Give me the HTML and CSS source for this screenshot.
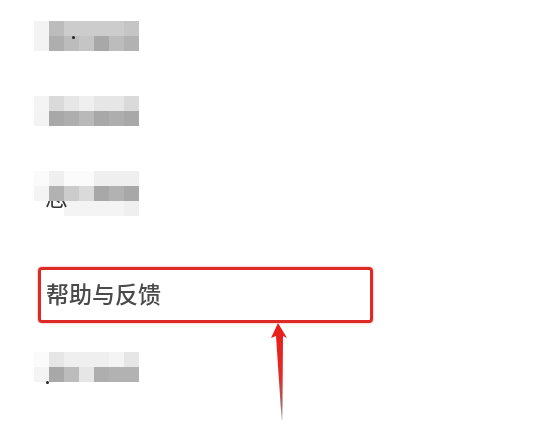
FILE: index.html
```html
<!DOCTYPE html>
<html lang="zh-CN">
<head>
<meta charset="utf-8">
<title>帮助与反馈</title>
<link rel="stylesheet" href="styles.css">
</head>
<body>
<main class="page">
  <div class="mosaic">
    <i class="g0"></i><i class="g6"></i><i class="g8"></i><i class="g8"></i><i class="g8"></i><i class="g8"></i><i class="g7"></i>
    <i class="g0"></i><i class="g3"></i><i class="g6"></i><i class="g7"></i><i class="g2"></i><i class="g6"></i><i class="g4"></i>
    <b class="dot dot-a"></b>
  </div>
  <div class="mosaic">
    <i class="g1"></i><i class="g9"></i><i class="g10"></i><i class="g11"></i><i class="g10"></i><i class="g10"></i><i class="g9"></i>
    <i class="g0"></i><i class="g2"></i><i class="g3"></i><i class="g5"></i><i class="g2"></i><i class="g3"></i><i class="g2"></i>
  </div>
  <div class="mosaic">
    <span class="glyph">志</span>
    <i class="g12"></i><i class="g11"></i><i class="g12"></i><i class="g12"></i><i class="g11"></i><i class="g11"></i><i class="g11"></i>
    <i class="g1 top"></i><i class="g4 top"></i><i class="g8 top"></i><i class="g9 top"></i><i class="g2 top"></i><i class="g4 top"></i><i class="g2 top"></i>
    <i class="none"></i><i class="none"></i><i class="g1"></i><i class="g1"></i><i class="g1"></i><i class="g1"></i><i class="g11"></i>
  </div>
  <div class="help-box">
    <span class="help-label">帮助与反馈</span>
  </div>
  <div class="mosaic">
    <i class="g12"></i><i class="g10"></i><i class="g11"></i><i class="g11"></i><i class="g11"></i><i class="g1"></i><i class="g10"></i>
    <i class="g1"></i><i class="g2"></i><i class="g6"></i><i class="g10"></i><i class="g3"></i><i class="g4"></i><i class="g4"></i>
    <b class="dot dot-b"></b>
  </div>
</main>
<svg class="arrow" viewBox="0 0 24 104" width="24" height="104" aria-hidden="true">
  <defs>
    <linearGradient id="arrow-fade" x1="0" y1="0" x2="0" y2="1">
      <stop offset="0" stop-color="#ea1c18"/>
      <stop offset="0.55" stop-color="#e42a26"/>
      <stop offset="0.85" stop-color="#9c6a66"/>
      <stop offset="1" stop-color="#c8c4c2"/>
    </linearGradient>
  </defs>
  <path d="M10 1 L3 16 L8 14 L13.6 98 L14.4 98 L15 14 L19 16 Z" fill="url(#arrow-fade)"/>
</svg>
</body>
</html>
```
FILE: styles.css
```css
* { box-sizing: border-box; }
html, body { margin: 0; padding: 0; background: #fff; }
body { width: 549px; height: 425px; overflow: hidden; position: relative; }

.page {
  display: flex;
  flex-direction: column;
  align-items: flex-start;
  gap: 45px;
  padding: 21px 0 0 34px;
}

.mosaic {
  position: relative;
  display: grid;
  grid-template-columns: repeat(7, 15px);
  grid-auto-rows: 15px;
  filter: blur(0.7px);
}
.mosaic i { display: block; }
.mosaic .top { position: relative; z-index: 2; }

.g0 { background: #f3f3f3; }
.g1 { background: #f4f4f4; }
.g2 { background: #a8a8a8; }
.g3 { background: #aeaeae; }
.g4 { background: #b2b2b2; }
.g5 { background: #b9b9b9; }
.g6 { background: #bcbcbc; }
.g7 { background: #c5c5c5; }
.g8 { background: #cccccc; }
.g9 { background: #dadada; }
.g10 { background: #e6e6e6; }
.g11 { background: #efefef; }
.g12 { background: #fbfbfb; }
.none { background: transparent; }

.dot { position: absolute; width: 3px; height: 3px; border-radius: 50%; background: #222; z-index: 3; }
.dot-a { left: 38px; top: 15px; }
.dot-b { left: 12px; top: 29px; }

.glyph {
  position: absolute;
  left: 11px;
  top: 10px;
  z-index: 1;
  font: 23px/30px "Noto Sans CJK SC", "Liberation Sans", sans-serif;
  color: #333;
}

.help-box {
  width: 335px;
  height: 56px;
  margin: 6px 0 -16px 4px;
  display: flex;
  align-items: center;
  padding: 0 0 3px 5px;
  border: 3px solid #dd2a24;
  border-radius: 4px;
  box-shadow: 0 0 2px rgba(226, 35, 31, 0.6);
}
.help-label {
  font: 500 23px/1 "Noto Sans CJK SC", "Liberation Sans", sans-serif;
  color: #4a4a4a;
  filter: blur(0.4px);
}

.arrow {
  position: absolute;
  left: 268px;
  top: 322px;
  filter: blur(0.3px);
}
```
